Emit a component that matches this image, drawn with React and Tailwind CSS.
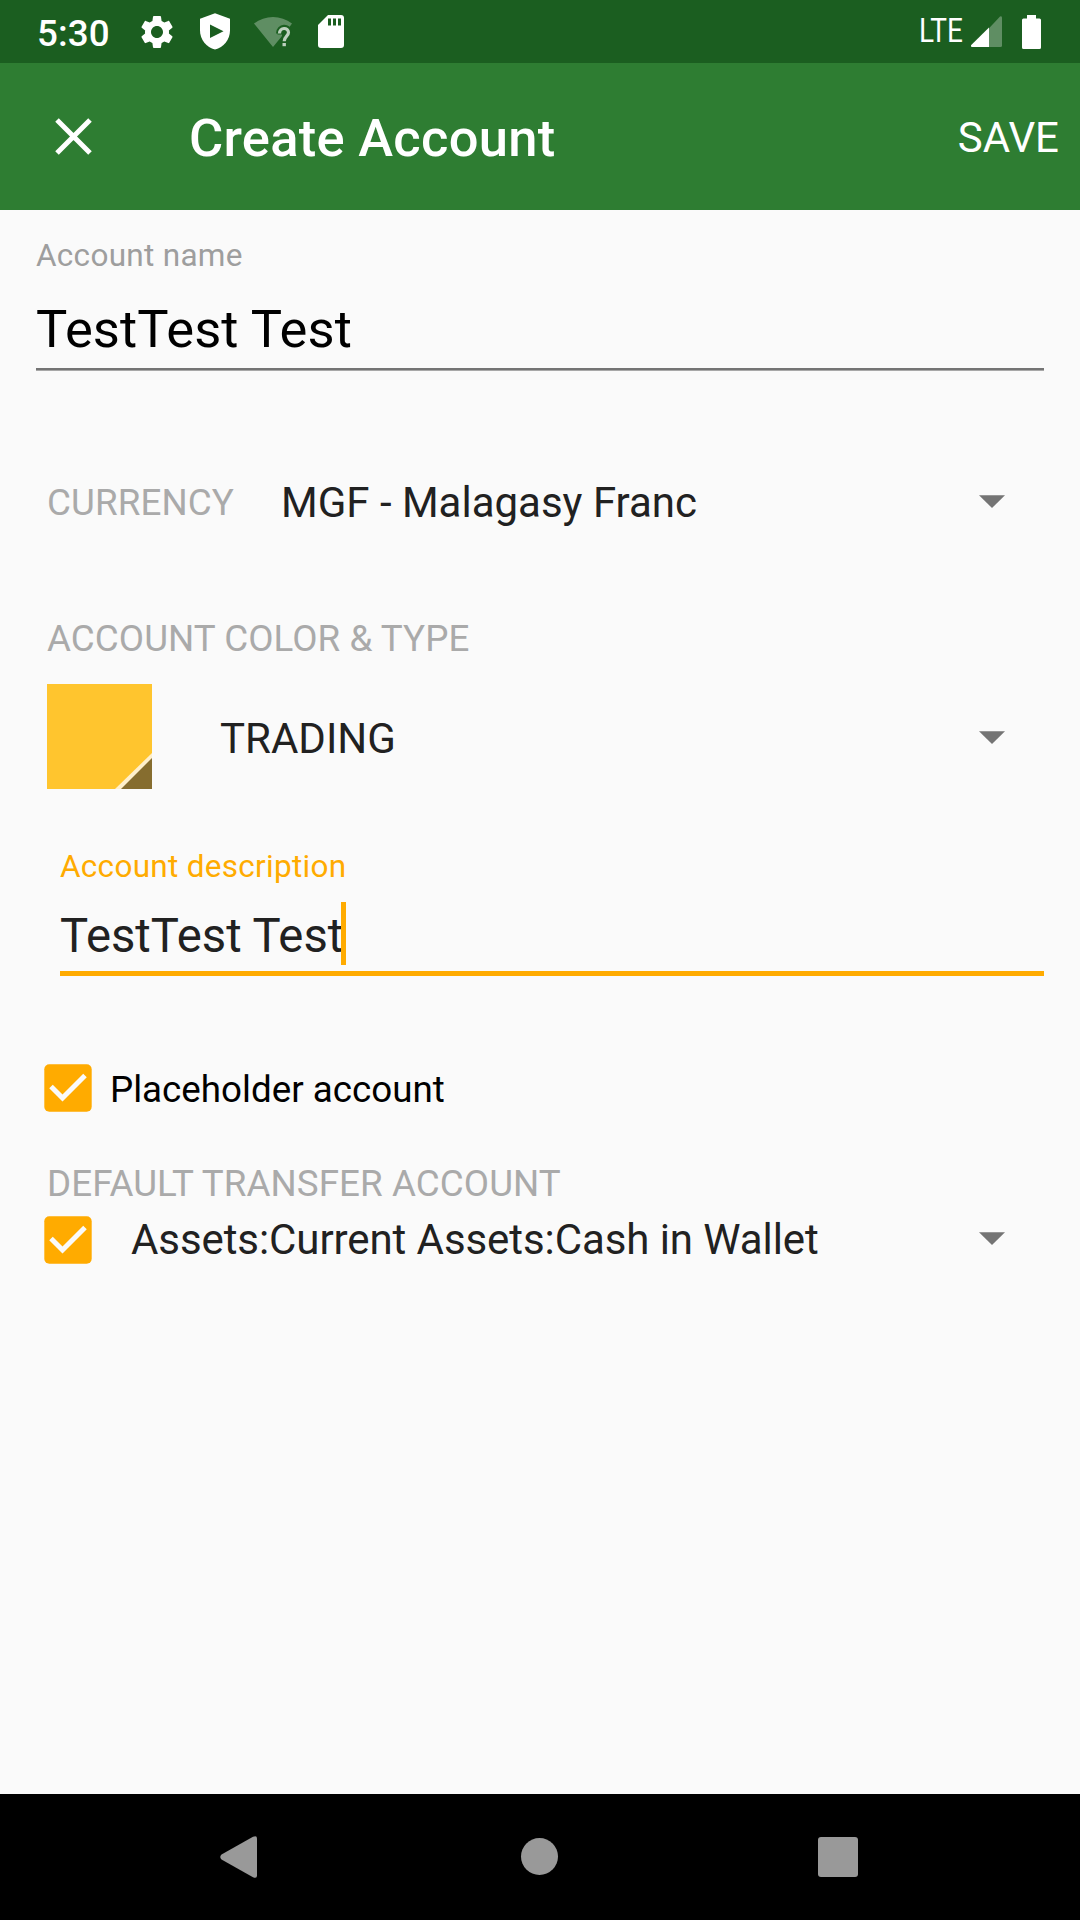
function Gear() {
  return (
    <svg className="ml-[28px] mt-px h-[40px] w-[40px]" viewBox="0 0 24 24" fill="#fff">
      <path d="M19.14 12.94c.04-.3.06-.61.06-.94 0-.32-.02-.64-.07-.94l2.03-1.58c.18-.14.23-.41.12-.61l-1.92-3.32c-.12-.22-.37-.29-.59-.22l-2.39.96c-.5-.38-1.03-.7-1.62-.94l-.36-2.54c-.04-.24-.24-.41-.48-.41h-3.84c-.24 0-.43.17-.47.41l-.36 2.54c-.59.24-1.13.57-1.62.94l-2.39-.96c-.22-.08-.47 0-.59.22L2.74 8.87c-.12.21-.08.47.12.61l2.03 1.58c-.05.3-.09.63-.09.94s.02.64.07.94l-2.03 1.58c-.18.14-.23.41-.12.61l1.92 3.32c.12.22.37.29.59.22l2.39-.96c.5.38 1.03.7 1.62.94l.36 2.54c.05.24.24.41.48.41h3.84c.24 0 .44-.17.47-.41l.36-2.54c.59-.24 1.13-.56 1.62-.94l2.39.96c.22.08.47 0 .59-.22l1.92-3.32c.12-.22.07-.47-.12-.61l-2.01-1.58zM12 15.6c-1.98 0-3.6-1.62-3.6-3.6s1.62-3.6 3.6-3.6 3.6 1.62 3.6 3.6-1.62 3.6-3.6 3.6z" />
    </svg>
  );
}

function StatusBar() {
  return (
    <div className="flex h-[63px] items-center bg-[#1B5E20] pl-[37px] text-white">
      <span className="w-[72px] whitespace-nowrap pt-[6px] text-[36.75px] font-medium leading-none tracking-[.1px]">5:30</span>
      <Gear />
      <svg className="ml-[23px] h-[37px] w-[30px]" viewBox="0 0 30 37">
        <path fill="#fff" d="M15 .3 30 5.8V17.500C30 26.500 23.500 34.500 15 36.500 6.500 34.500 0 26.500 0 17.500V5.800Z" />
        <path fill="#1B5E20" d="M10 11.500 23.500 18.200 10 25Z" />
      </svg>
      <svg className="ml-[24px] h-[32px] w-[38px]" viewBox="0 0 38 32">
        <path fill="#fff" fillOpacity=".3" d="M0 7.500C11-1.300 27-1.300 38 7.500L35.500 11C30 9 24 12 23.500 18.500H28V20L19 31Z" />
        <path fill="none" stroke="#1B5E20" strokeWidth="7" d="M25.500 17.500C25.500 10.800 34.500 10.800 34.500 16.500 34.500 20 30.200 20.500 30.200 25" />
        <path fill="none" stroke="#bdd0be" strokeWidth="3.200" d="M25.500 17.500C25.500 11 34.500 11 34.500 16.600 34.500 20 30.200 20.500 30.200 25.300" />
        <path fill="#bdd0be" d="M28.500 27h3.400v3.200h-3.400z" />
      </svg>
      <svg className="ml-[26px] h-[33px] w-[26px]" viewBox="0 0 26 33">
        <path fill="#fff" d="M10 0h13a3 3 0 0 1 3 3v27a3 3 0 0 1-3 3H3a3 3 0 0 1-3-3V10Z" />
        <path fill="#1B5E20" d="M10 3.500h3v7h-3zM15 3.500h3v7h-3zM20 3.500h3v7h-3z" />
      </svg>
      <span className="ml-auto w-[52px] origin-left scale-x-[.86] whitespace-nowrap text-[32.500px] leading-none">LTE</span>
      <svg className="mr-[20px] h-[31px] w-[31px]" viewBox="0 0 31 31">
        <path fill="#fff" fillOpacity=".3" d="M18 12.200 29 .6Q31-.6 31 2V29.500Q31 31 29.500 31H18Z" />
        <path fill="#fff" d="M18 11.500V31H1Q-1 30.500.5 28.800Z" />
      </svg>
      <svg className="mr-[39px] h-[34px] w-[19px]" viewBox="0 0 19 34">
        <path fill="#fff" d="M5 0h9v3.500h3.500A1.500 1.500 0 0 1 19 5v27.500a1.500 1.500 0 0 1-1.500 1.500h-16A1.500 1.500 0 0 1 0 32.500V5a1.500 1.500 0 0 1 1.500-1.500H5Z" />
      </svg>
    </div>
  );
}

function AppBar() {
  return (
    <header className="flex h-[147px] items-center bg-[#2E7D32] pl-[55px] pr-[21px] text-white">
      <svg className="h-[37px] w-[37px]" viewBox="0 0 37 37" stroke="#fff" strokeWidth="5">
        <path d="M2 2 35 35M35 2 2 35" />
      </svg>
      <h1 className="ml-[97px] pt-[3px] text-[52.500px] font-medium leading-none tracking-[.26px]">Create Account</h1>
      <button className="ml-auto pt-[3px] text-[42px] leading-none">SAVE</button>
    </header>
  );
}

function Caret() {
  return (
    <svg className="h-[13px] w-[26px] shrink-0" viewBox="0 0 26 13">
      <path fill="#747474" d="M0 0.2h26L13 13z" />
    </svg>
  );
}

function Check() {
  return (
    <svg className="h-[48px] w-[48px] shrink-0" viewBox="0 0 48 48">
      <rect x=".3" y=".3" width="47.400" height="47.400" rx="5" fill="#FFAB00" />
      <path fill="none" stroke="#fafafa" strokeWidth="5" d="M7 22.500 18.500 34 41 11.500" />
    </svg>
  );
}

function NavBar() {
  return (
    <nav className="flex h-[126px] items-center bg-black pl-[220px]">
      <svg className="h-[42px] w-[37px]" viewBox="0 0 37 42">
        <path fill="#999" d="M33 .8Q37-1 37 2.500V39.500Q37 43 33 41.200L1.500 23.500Q-1 21 1.500 18.500Z" />
      </svg>
      <div className="mb-px ml-[264px] h-[37px] w-[37px] rounded-full bg-[#999]" />
      <div className="ml-[260px] h-[40px] w-[40px] rounded-[3px] bg-[#999]" />
    </nav>
  );
}

export default function App() {
  return (
    <div className="flex h-[1920px] w-[1080px] flex-col bg-[#fafafa] font-[Roboto,sans-serif] text-[#212121]">
      <StatusBar />
      <AppBar />
      <main className="flex flex-1 flex-col">
        <label className="ml-[36px] mt-[28px] flex h-[36px] items-center text-[31.500px] leading-none tracking-[.29px] text-[#9e9e9e]">Account name</label>
        <div className="ml-[36px] mt-[25px] flex h-[60px] items-center text-[52.500px] leading-none tracking-[.1px] text-black">TestTest Test</div>
        <div className="mx-[36px] mt-[9px] h-[3px] border-b border-[#a8a8a8] bg-[#747474]" />

        <div className="ml-[47px] mt-[89px] flex h-[85px] items-center pr-[75px]">
          <span className="w-[234px] pt-[2px] text-[36.750px] leading-none tracking-[.1px] text-[#aaa]">CURRENCY</span>
          <span className="text-[42px] leading-none">MGF - Malagasy Franc</span>
          <span className="ml-auto pb-[2px]"><Caret /></span>
        </div>

        <h2 className="ml-[47px] mt-[74px] flex h-[41px] items-center text-[36.750px] leading-none tracking-[.06px] text-[#aaa]">ACCOUNT COLOR &amp; TYPE</h2>
        <div className="ml-[47px] mt-[24px] flex h-[105px] items-center pr-[75px]">
          <svg className="h-[105px] w-[105px]" viewBox="0 0 105 105">
            <path fill="#FFC52E" d="M0 0h105v105H0z" />
            <path fill="#FFF0CC" d="M105 69v36H68z" />
            <path fill="#866D2F" d="M105 74v31H74z" />
          </svg>
          <span className="ml-[68px] pt-[4px] text-[42px] leading-none">TRADING</span>
          <span className="ml-auto pt-[2px]"><Caret /></span>
        </div>

        <label className="ml-[60px] mt-[60px] flex h-[36px] items-center text-[31.500px] leading-none tracking-[.29px] text-[#FFAB00]">Account description</label>
        <div className="ml-[60px] mt-[17px] flex h-[63px] items-center">
          <span className="w-[281px] whitespace-nowrap pt-[7px] text-[47.250px] leading-none">TestTest Test</span>
          <span className="z-10 h-[63px] w-[5px] bg-[#FFAB00]" />
        </div>
        <div className="ml-[60px] mr-[36px] mt-[6px] h-[5px] bg-[#FFAB00]" />

        <div className="ml-[44px] mt-[88px] flex h-[48px] items-center">
          <Check />
          <span className="ml-[18px] pt-[5px] text-[36.750px] leading-none text-black">Placeholder account</span>
        </div>

        <h2 className="ml-[47px] mt-[52px] flex h-[41px] items-center text-[36.750px] leading-none tracking-[.07px] text-[#aaa]">DEFAULT TRANSFER ACCOUNT</h2>
        <div className="ml-[44px] mt-[11px] flex h-[48px] items-center pr-[75px]">
          <Check />
          <span className="ml-[39px] text-[42px] leading-none tracking-[-.08px]">Assets:Current Assets:Cash in Wallet</span>
          <span className="ml-auto pb-[3px]"><Caret /></span>
        </div>
      </main>
      <NavBar />
    </div>
  );
}
